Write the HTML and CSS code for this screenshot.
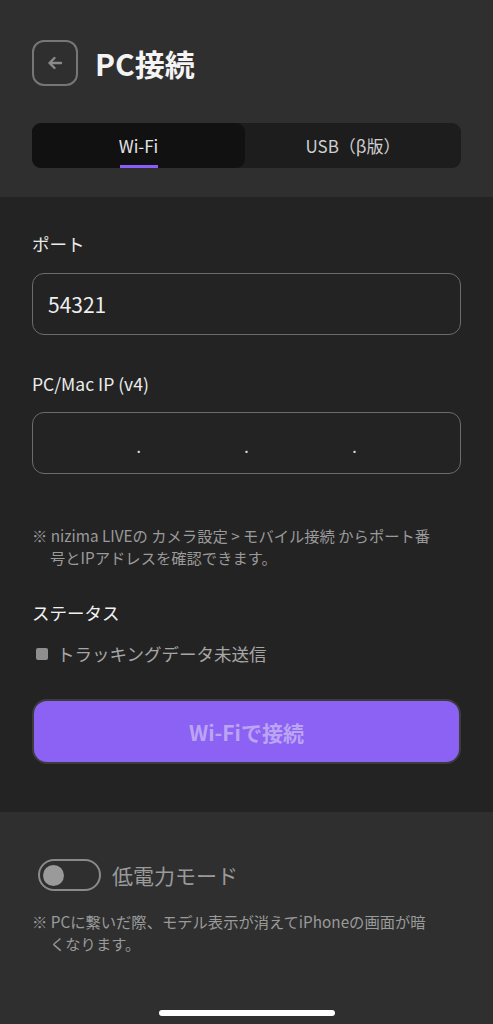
FILE: index.html
```html
<!DOCTYPE html>
<html lang="ja">
<head>
<meta charset="utf-8">
<link rel="stylesheet" href="styles.css">
</head>
<body>
<div class="page">
  <section class="top">
    <div class="header">
      <button class="back" aria-label="戻る">
        <svg width="20" height="20" viewBox="0 0 20 20"><path d="M16 10H4.5M9.5 5L4.5 10L9.5 15" fill="none" stroke="#8a8a8a" stroke-width="2.4" stroke-linecap="round" stroke-linejoin="round"/></svg>
      </button>
      <h1 class="title">PC接続</h1>
    </div>
    <div class="tabs">
      <div class="tab active"><span class="tab-label">Wi-Fi</span><span class="tab-bar"></span></div>
      <div class="tab"><span class="tab-label">USB（β版）</span></div>
    </div>
  </section>

  <section class="middle">
    <div class="label label-port">ポート</div>
    <div class="field"><span class="field-value">54321</span></div>
    <div class="label label-ip">PC/Mac IP (v4)</div>
    <div class="field ip">
      <span class="seg"></span><span class="dot">.</span>
      <span class="seg"></span><span class="dot">.</span>
      <span class="seg"></span><span class="dot">.</span>
      <span class="seg"></span>
    </div>
    <p class="note note-mid">※ nizima LIVEの カメラ設定 &gt; モバイル接続 からポート番号とIPアドレスを確認できます。</p>
    <div class="status-title">ステータス</div>
    <div class="status-row"><span class="status-box"></span><span>トラッキングデータ未送信</span></div>
    <button class="connect">Wi-Fiで接続</button>
  </section>

  <section class="bottom">
    <div class="toggle-row">
      <span class="toggle"><span class="knob"></span></span>
      <span class="toggle-label">低電力モード</span>
    </div>
    <p class="note note-bottom">※ PCに繋いだ際、モデル表示が消えてiPhoneの画面が暗くなります。</p>
    <div class="home-bar"></div>
  </section>
</div>
</body>
</html>
```
FILE: styles.css
```css
* { box-sizing: border-box; }
html, body { margin: 0; padding: 0; }
body {
  background: #232323;
  font-family: "Noto Sans CJK JP", "Noto Sans", sans-serif;
  color: #e8e8e8;
}
.page {
  width: 493px;
  min-height: 1024px;
  display: flex;
  flex-direction: column;
}
.top {
  background: #2f2f2f;
  padding: 40px 32px 29px;
}
.header {
  display: flex;
  align-items: center;
  gap: 17px;
}
.back {
  width: 46px;
  height: 46px;
  border: 2px solid #767676;
  border-radius: 12px;
  background: transparent;
  display: flex;
  align-items: center;
  justify-content: center;
  padding: 0;
}
.title {
  margin: 0;
  font-size: 30px;
  line-height: 40px;
  font-weight: 700;
  color: #f4f4f4;
}
.tabs {
  margin-top: 37px;
  height: 45px;
  display: flex;
  background: #1d1d1d;
  border-radius: 9px;
}
.tab {
  flex: 1;
  display: flex;
  flex-direction: column;
  align-items: center;
  padding-top: 11px;
  border-radius: 9px;
  font-size: 17px;
  line-height: 24px;
  color: #cfcfcf;
}
.tab.active {
  flex: 0 0 213px;
  background: #111111;
  color: #e4e4e4;
}
.tab-bar {
  display: block;
  width: 38px;
  height: 4px;
  margin-top: 7px;
  background: #8b5cf6;
}
.middle {
  background: #232323;
  padding: 35px 32px 48px;
}
.label {
  font-size: 17.5px;
  line-height: 24px;
  color: #ececec;
}
.label-ip { margin-top: 37px; }
.field {
  margin-top: 17px;
  height: 62px;
  border: 1.5px solid #6c6c6c;
  border-radius: 12px;
  display: flex;
  align-items: center;
  padding-left: 15px;
}
.label-ip + .field { margin-top: 16px; }
.field-value {
  font-size: 21px;
  color: #eeeeee;
}
.field.ip {
  padding: 0;
}
.seg { flex: 1; }
.dot {
  font-size: 16px;
  line-height: 16px;
  padding-top: 6px;
  color: #e0e0e0;
}
.note {
  margin: 0;
  font-size: 15.3px;
  line-height: 22px;
  color: #9a9a9a;
  padding-left: 18px;
  padding-right: 21px;
  text-indent: -18px;
}
.note-mid {
  margin-top: 50px;
}
.status-title {
  margin-top: 32px;
  font-size: 17.5px;
  line-height: 26px;
  color: #f0f0f0;
}
.status-row {
  margin-top: 15px;
  display: flex;
  align-items: center;
  gap: 9px;
  font-size: 17.5px;
  line-height: 26px;
  color: #a6a6a6;
  padding-left: 4px;
}
.status-box {
  width: 12px;
  height: 12px;
  border-radius: 2px;
  background: #8e8e8e;
}
.connect {
  display: block;
  width: 100%;
  height: 65px;
  margin-top: 32px;
  background: #8b62f3;
  border: 2px solid #3c3c3c;
  border-radius: 15px;
  font-family: inherit;
  font-size: 21px;
  font-weight: 700;
  color: #bba5f3;
}
.bottom {
  flex: 1;
  background: #2f2f2f;
  padding: 47px 32px 8px;
  display: flex;
  flex-direction: column;
}
.toggle-row {
  display: flex;
  align-items: center;
  gap: 11px;
  padding-left: 6px;
}
.toggle {
  width: 63px;
  height: 32px;
  border: 2.5px solid #8a8a8a;
  border-radius: 16px;
  display: flex;
  align-items: center;
  padding-left: 3px;
}
.knob {
  width: 21px;
  height: 21px;
  border-radius: 50%;
  background: #9a9a9a;
}
.toggle-label {
  font-size: 21px;
  line-height: 30px;
  color: #9a9a9a;
}
.note-bottom {
  margin-top: 19px;
}
.home-bar {
  margin: auto auto 0;
  width: 176px;
  height: 6px;
  border-radius: 3px;
  background: #ffffff;
}
```
